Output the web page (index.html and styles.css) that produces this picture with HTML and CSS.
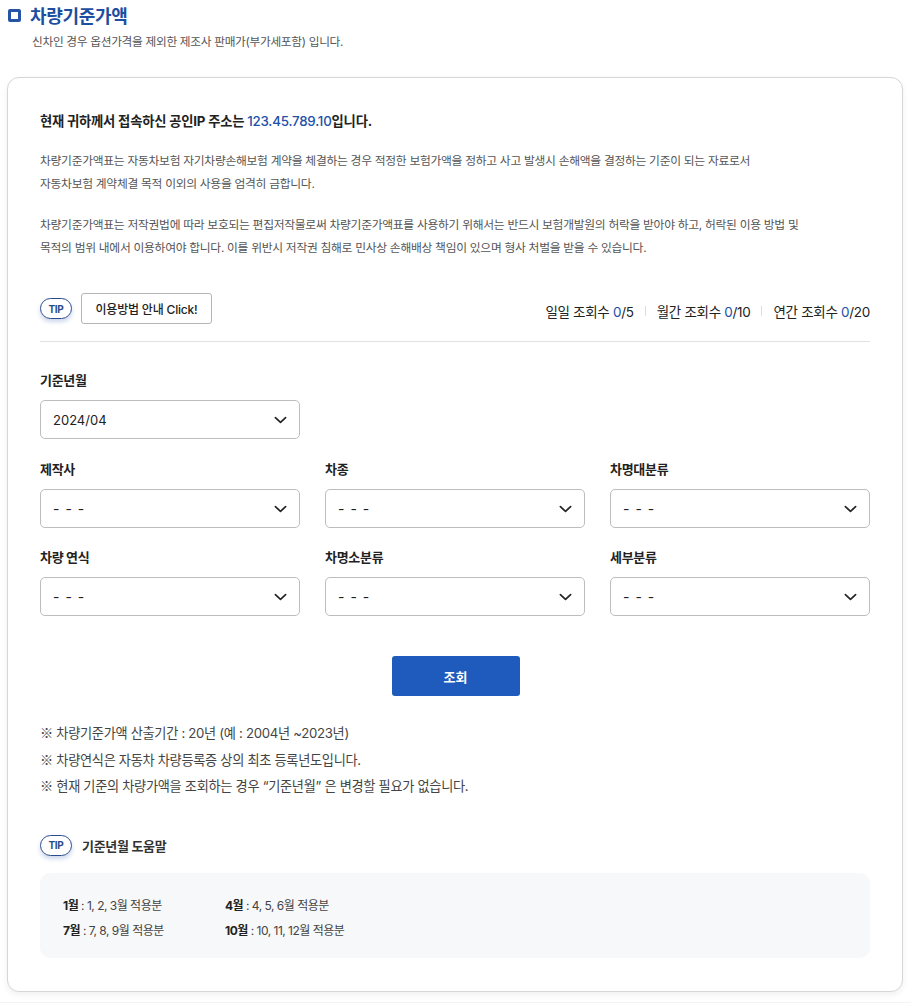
FILE: index.html
```html
<!DOCTYPE html>
<html lang="ko">
<head>
<meta charset="utf-8">
<link rel="stylesheet" href="styles.css">
</head>
<body>
<div class="page">
  <div class="head">
    <h1 class="title"><span class="sq"></span>차량기준가액</h1>
    <p class="sub">신차인 경우 옵션가격을 제외한 제조사 판매가(부가세포함) 입니다.</p>
  </div>
  <div class="card">
    <p class="ip">현재 귀하께서 접속하신 공인IP 주소는 <span class="blue">123.45.789.10</span>입니다.</p>
    <p class="desc">차량기준가액표는 자동차보험 자기차량손해보험 계약을 체결하는 경우 적정한 보험가액을 정하고 사고 발생시 손해액을 결정하는 기준이 되는 자료로서<br>자동차보험 계약체결 목적 이외의 사용을 엄격히 금합니다.</p>
    <p class="desc">차량기준가액표는 저작권법에 따라 보호되는 편집저작물로써 차량기준가액표를 사용하기 위해서는 반드시 보험개발원의 허락을 받아야 하고, 허락된 이용 방법 및<br>목적의 범위 내에서 이용하여야 합니다. 이를 위반시 저작권 침해로 민사상 손해배상 책임이 있으며 형사 처벌을 받을 수 있습니다.</p>

    <div class="tiprow">
      <div class="tipleft">
        <span class="tip">TIP</span>
        <button class="guide">이용방법 안내 Click!</button>
      </div>
      <div class="stats">
        <span>일일 조회수 <em>0</em>/5</span>
        <i class="sep"></i>
        <span>월간 조회수 <em>0</em>/10</span>
        <i class="sep"></i>
        <span>연간 조회수 <em>0</em>/20</span>
      </div>
    </div>

    <div class="field first">
      <label class="lbl">기준년월</label>
      <div class="sel"><span>2024/04</span><svg viewBox="0 0 14 8" class="chev"><path d="M1.5 1.5 7 6.5 12.5 1.5" fill="none" stroke="#222" stroke-width="1.8" stroke-linecap="round" stroke-linejoin="round"/></svg></div>
    </div>

    <div class="grid">
      <div class="field"><label class="lbl">제작사</label><div class="sel"><span class="ph">- - -</span><svg viewBox="0 0 14 8" class="chev"><path d="M1.5 1.5 7 6.5 12.5 1.5" fill="none" stroke="#222" stroke-width="1.8" stroke-linecap="round" stroke-linejoin="round"/></svg></div></div>
      <div class="field"><label class="lbl">차종</label><div class="sel"><span class="ph">- - -</span><svg viewBox="0 0 14 8" class="chev"><path d="M1.5 1.5 7 6.5 12.5 1.5" fill="none" stroke="#222" stroke-width="1.8" stroke-linecap="round" stroke-linejoin="round"/></svg></div></div>
      <div class="field"><label class="lbl">차명대분류</label><div class="sel"><span class="ph">- - -</span><svg viewBox="0 0 14 8" class="chev"><path d="M1.5 1.5 7 6.5 12.5 1.5" fill="none" stroke="#222" stroke-width="1.8" stroke-linecap="round" stroke-linejoin="round"/></svg></div></div>
      <div class="field"><label class="lbl">차량 연식</label><div class="sel"><span class="ph">- - -</span><svg viewBox="0 0 14 8" class="chev"><path d="M1.5 1.5 7 6.5 12.5 1.5" fill="none" stroke="#222" stroke-width="1.8" stroke-linecap="round" stroke-linejoin="round"/></svg></div></div>
      <div class="field"><label class="lbl">차명소분류</label><div class="sel"><span class="ph">- - -</span><svg viewBox="0 0 14 8" class="chev"><path d="M1.5 1.5 7 6.5 12.5 1.5" fill="none" stroke="#222" stroke-width="1.8" stroke-linecap="round" stroke-linejoin="round"/></svg></div></div>
      <div class="field"><label class="lbl">세부분류</label><div class="sel"><span class="ph">- - -</span><svg viewBox="0 0 14 8" class="chev"><path d="M1.5 1.5 7 6.5 12.5 1.5" fill="none" stroke="#222" stroke-width="1.8" stroke-linecap="round" stroke-linejoin="round"/></svg></div></div>
    </div>

    <div class="btnrow"><button class="search">조회</button></div>

    <ul class="notes">
      <li><span class="mk">※</span> 차량기준가액 산출기간 : 20년 (예 : 2004년 ~2023년)</li>
      <li><span class="mk">※</span> 차량연식은 자동차 차량등록증 상의 최초 등록년도입니다.</li>
      <li><span class="mk">※</span> 현재 기준의 차량가액을 조회하는 경우 “기준년월” 은 변경할 필요가 없습니다.</li>
    </ul>

    <div class="helphead"><span class="tip">TIP</span><span class="helptitle">기준년월 도움말</span></div>
    <div class="helpbox">
      <div class="hrow"><span class="hcell"><b>1월</b> : 1, 2, 3월 적용분</span><span class="hcell"><b>4월</b> : 4, 5, 6월 적용분</span></div>
      <div class="hrow"><span class="hcell"><b>7월</b> : 7, 8, 9월 적용분</span><span class="hcell"><b>10월</b> : 10, 11, 12월 적용분</span></div>
    </div>
  </div>
</div>
</body>
</html>
```

FILE: styles.css
```css
* { box-sizing: border-box; }
html, body { margin: 0; padding: 0; }
body {
  font-family: "Inter", "Noto Sans CJK KR", "Noto Sans", sans-serif;
  color: #222;
  background: #f4f4f4;
}
.page {
  background: #fff;
  padding: 0 8px 10px 7px;
}
.head { padding: 1px 0 0 1px; }
.title {
  display: flex;
  align-items: center;
  gap: 9px;
  margin: 0;
  height: 28px;
  font-size: 18px;
  font-weight: 700;
  color: #1d4ea0;
  letter-spacing: -0.3px;
}
.sq {
  width: 13px;
  height: 13px;
  border: 3px solid #2553a6;
  border-radius: 2px;
  display: inline-block;
}
.sub {
  margin: 5px 0 0 24px;
  font-size: 11.7px;
  color: #555;
  letter-spacing: -0.3px;
  line-height: 16px;
}
.card {
  margin-top: 27px;
  border: 1px solid #d6d6d6;
  border-radius: 12px;
  padding: 33px 32px 33px 32px;
  background: #fff;
  box-shadow: 0 3px 6px rgba(0,0,0,0.06);
}
.ip {
  margin: 0;
  font-size: 13.3px;
  font-weight: 700;
  color: #222;
  letter-spacing: -0.2px;
  line-height: 20px;
}
.blue { color: #2050a8; font-weight: 500; }
.desc {
  margin: 19px 0 0;
  font-size: 11.8px;
  line-height: 23px;
  color: #555;
  letter-spacing: -0.3px;
}
.desc + .desc { margin-top: 18px; }
.tiprow {
  margin-top: 33px;
  display: flex;
  justify-content: space-between;
  align-items: center;
  padding-bottom: 17px;
  border-bottom: 1px solid #e2e2e2;
}
.tipleft { display: flex; align-items: center; gap: 9px; }
.tip {
  display: inline-flex;
  align-items: center;
  justify-content: center;
  width: 32px;
  height: 21px;
  border: 1.5px solid #2a4c8e;
  border-radius: 11px;
  font-size: 10px;
  font-weight: 700;
  color: #2a4c8e;
  box-shadow: 0 3px 4px rgba(60,100,180,0.25);
  letter-spacing: -0.3px;
}
.guide {
  font-family: inherit;
  height: 31px;
  width: 131px;
  border: 1px solid #b5b5b5;
  border-radius: 3px;
  background: #fff;
  font-size: 12px;
  font-weight: 500;
  color: #222;
  letter-spacing: -0.2px;
  padding: 0;
}
.stats {
  display: flex;
  align-items: center;
  font-size: 13.5px;
  color: #222;
  letter-spacing: -0.3px;
  margin-top: 4px;
}
.stats em { font-style: normal; color: #2050a8; }
.sep {
  width: 1px;
  height: 10px;
  background: #ddd;
  margin: 0 11px;
}
.field { display: flex; flex-direction: column; }
.field.first { margin-top: 28px; width: 260px; }
.lbl {
  font-size: 13px;
  font-weight: 700;
  color: #222;
  letter-spacing: -0.3px;
  line-height: 20px;
  margin-bottom: 10px;
}
.sel {
  height: 39px;
  border: 1px solid #bdbdbd;
  border-radius: 5px;
  display: flex;
  align-items: center;
  justify-content: space-between;
  padding: 0 12px 0 12px;
  font-size: 13px;
  color: #222;
}
.ph { letter-spacing: 1px; font-size: 14px; }
.chev { width: 13px; height: 8px; }
.grid {
  margin-top: 20px;
  display: grid;
  grid-template-columns: repeat(3, 1fr);
  column-gap: 25px;
  row-gap: 19px;
}
.btnrow { display: flex; justify-content: center; margin-top: 40px; }
.search {
  font-family: inherit;
  width: 128px;
  height: 40px;
  border: 0;
  border-radius: 3px;
  background: #1f5bbd;
  color: #fff;
  font-size: 13px;
  font-weight: 700;
  margin-left: 1px;
}
.notes {
  list-style: none;
  margin: 24px 0 0;
  padding: 0;
  font-size: 13.2px;
  line-height: 26.5px;
  color: #444;
  letter-spacing: -0.3px;
}
.mk { font-family: "Noto Sans CJK KR", sans-serif; }
.helphead {
  margin-top: 35px;
  display: flex;
  align-items: center;
  gap: 10px;
}
.helptitle {
  font-size: 13px;
  font-weight: 700;
  color: #333;
  letter-spacing: -0.3px;
}
.helpbox {
  margin-top: 17px;
  background: #f7f8fa;
  border-radius: 10px;
  padding: 20px 23px 15px;
}
.hrow {
  display: flex;
  font-size: 12px;
  line-height: 25px;
  color: #444;
  letter-spacing: -0.5px;
}
.hcell { width: 162px; }
.hcell b { color: #222; font-weight: 700; }
```
